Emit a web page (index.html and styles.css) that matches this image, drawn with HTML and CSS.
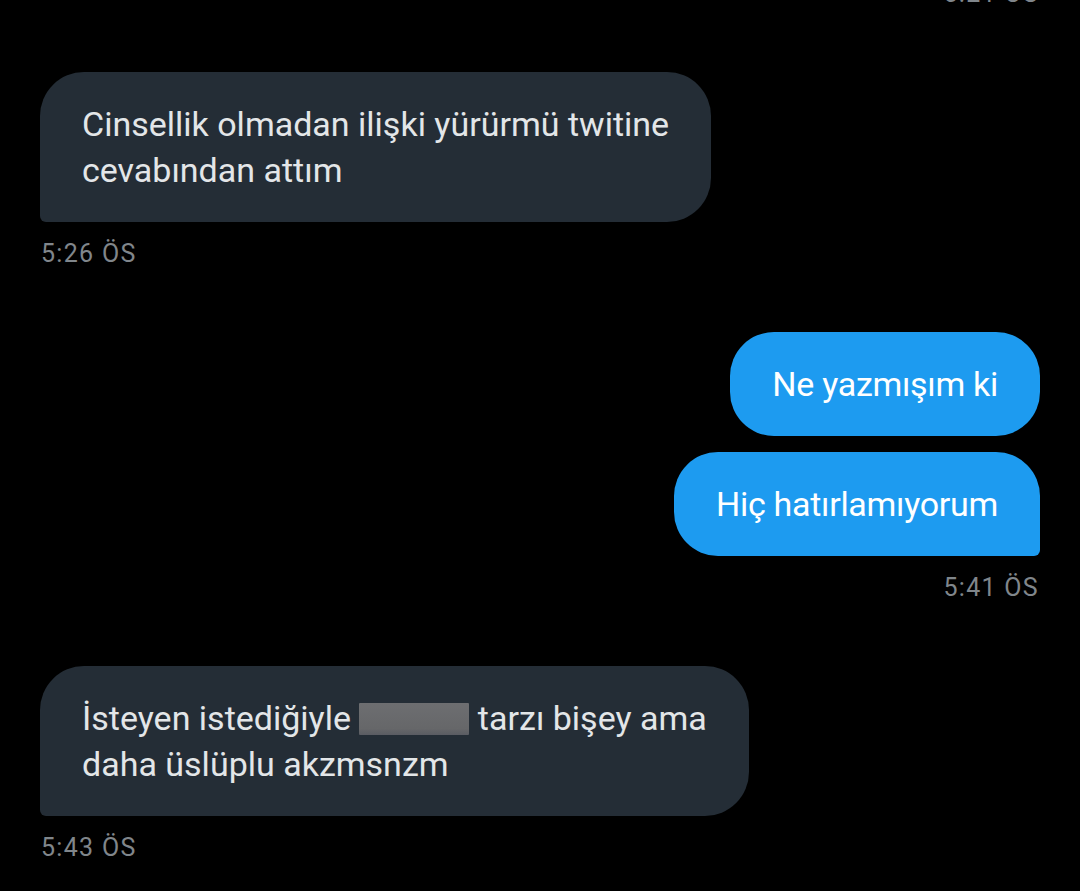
FILE: index.html
```html
<!DOCTYPE html>
<html lang="tr">
<head>
<meta charset="utf-8">
<title>Mesajlar</title>
<link rel="stylesheet" href="styles.css">
</head>
<body>
<main class="chat">
  <section class="group out">
    <div class="time time-cut">5:21 ÖS</div>
  </section>

  <section class="group in">
    <div class="bubbles">
      <p class="bubble recv">Cinsellik olmadan ilişki yürürmü twitine<br>cevabından attım</p>
    </div>
    <div class="time">5:26 ÖS</div>
  </section>

  <section class="group out">
    <div class="bubbles">
      <p class="bubble sent round">Ne yazmışım ki</p>
      <p class="bubble sent">Hiç hatırlamıyorum</p>
    </div>
    <div class="time">5:41 ÖS</div>
  </section>

  <section class="group in">
    <div class="bubbles">
      <p class="bubble recv">İsteyen istediğiyle <span class="redact"></span> tarzı bişey ama<br>daha üslüplu akzmsnzm</p>
    </div>
    <div class="time">5:43 ÖS</div>
  </section>
</main>
</body>
</html>
```

FILE: styles.css
```css
html, body {
  margin: 0;
  background: #000;
}

body {
  font-family: Roboto, "Noto Sans", "Liberation Sans", sans-serif;
  width: 1080px;
  height: 891px;
  overflow: hidden;
}

.chat {
  padding: 0 40px;
  display: flex;
  flex-direction: column;
}

.group {
  display: flex;
  flex-direction: column;
}

.group + .group {
  margin-top: 64px;
}

.group.in {
  align-items: flex-start;
}

.group.out {
  align-items: flex-end;
}

.bubbles {
  display: flex;
  flex-direction: column;
  gap: 16px;
  align-items: inherit;
}

.bubble {
  margin: 0;
  width: fit-content;
  padding: 29px 42px 29px;
  font-size: 34px;
  line-height: 46px;
  border-radius: 44px;
  white-space: nowrap;
}

.recv {
  background: #242d36;
  color: #e3e6e8;
  border-bottom-left-radius: 6px;
}

.sent {
  background: #1d9bf0;
  color: #ffffff;
  letter-spacing: -0.3px;
  border-bottom-right-radius: 6px;
}

.sent.round {
  border-bottom-right-radius: 44px;
}

.redact {
  display: inline-block;
  width: 110px;
  height: 32px;
  vertical-align: -5px;
  background: linear-gradient(180deg, #6d6e71 0%, #666769 80%, #5a5c63 100%);
  border-radius: 1px;
}

.time {
  margin-top: 17px;
  font-size: 25px;
  line-height: 29px;
  letter-spacing: 1.3px;
  color: #80868b;
  padding: 0 1px;
}

.time-cut {
  margin-top: -21px;
}
```
